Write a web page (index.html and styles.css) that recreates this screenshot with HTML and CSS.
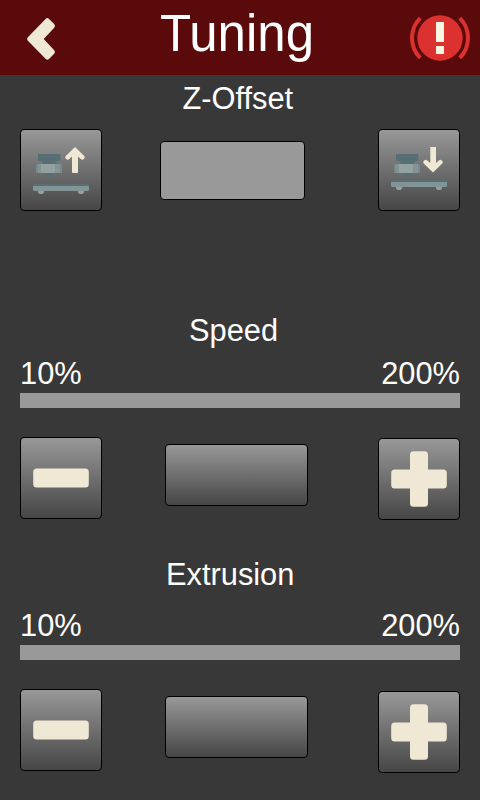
FILE: index.html
```html
<!DOCTYPE html>
<html lang="en">
<head>
<meta charset="utf-8">
<title>Tuning</title>
<link rel="stylesheet" href="styles.css">
</head>
<body>
<header class="bar">
  <svg class="back" width="30" height="44" viewBox="26 17 30 44"><path d="M45.8 18.7Q47.3 17.4 49 18.900L54.2 24Q55.8 26 54.2 27.800L43.7 39L54.2 50.200Q55.8 52 54.2 53.800L49 59.100Q47.3 60.600 45.8 59.100L27.600 40.500Q26.600 39 27.600 37.500Z" fill="#efe8d5"/></svg>
  <h1 class="title">Tuning</h1>
  <svg class="alert" width="62" height="50" viewBox="409 13 62 50"><circle cx="440" cy="38" r="22.700" fill="#dc322f"/><path d="M420.200 18.200A28 28 0 0 0 420.200 57.800M459.800 18.200A28 28 0 0 1 459.800 57.800" fill="none" stroke="#dc322f" stroke-width="4"/><path d="M436 22h8v20h-8zM436 46h8v8h-8z" fill="#fdf6e3"/></svg>
</header>
<main>
  <section class="offset">
    <h2>Z-Offset</h2>
    <div class="controls">
      <button class="btn square" aria-label="Raise"><svg width="80" height="80" viewBox="21 130 80 80"><use href="#nozzle"/><path d="M72 172V156.500L69 159.300Q67.500 160.300 66 158.800Q64.500 157.500 65.500 156.200L75 147L84.500 156.200Q85.500 157.500 84 158.800Q82.500 160.300 81 159.300L78 156.500V172Q78 173 77 173H73Q72 173 72 172Z" fill="#efe8d5"/><use href="#bed"/></svg></button>
      <div class="field"></div>
      <button class="btn square" aria-label="Lower"><svg width="80" height="80" viewBox="21 130 80 80"><use href="#nozzle"/><path d="M72.300 147H78V163L81 160.200Q82.500 159.200 84 160.700Q85.500 162 84.500 163.300L75 172.500L65.500 163.300Q64.500 162 66 160.700Q67.500 159.200 69 160.200L72.300 163Z" fill="#efe8d5"/><use href="#bed" y="-4"/></svg></button>
    </div>
  </section>
  <section class="speed">
    <h2>Speed</h2>
    <div class="range"><span>10%</span><span>200%</span></div>
    <div class="track"></div>
    <div class="controls">
      <button class="btn square" aria-label="Decrease"><svg width="80" height="80"><rect x="12.200" y="30.500" width="55.600" height="19" rx="3.500" fill="#efe8d5"/></svg></button>
      <div class="btn value"></div>
      <button class="btn square plus" aria-label="Increase"><svg width="80" height="80"><path d="M34.500 12.200h11q3.500 0 3.500 3.500V30.500H64.300q3.500 0 3.500 3.500V46q0 3.500-3.500 3.500H49V64.300q0 3.500-3.500 3.500h-11q-3.500 0-3.500-3.500V49.500H15.700q-3.500 0-3.500-3.500V34q0-3.500 3.500-3.500H31V15.700q0-3.500 3.500-3.500z" fill="#efe8d5"/></svg></button>
    </div>
  </section>
  <section class="extrusion">
    <h2>Extrusion</h2>
    <div class="range"><span>10%</span><span>200%</span></div>
    <div class="track"></div>
    <div class="controls">
      <button class="btn square" aria-label="Decrease"><svg width="80" height="80"><rect x="12.200" y="30.500" width="55.600" height="19" rx="3.500" fill="#efe8d5"/></svg></button>
      <div class="btn value"></div>
      <button class="btn square plus" aria-label="Increase"><svg width="80" height="80"><path d="M34.500 12.200h11q3.500 0 3.500 3.500V30.500H64.300q3.500 0 3.500 3.500V46q0 3.500-3.500 3.500H49V64.300q0 3.500-3.500 3.500h-11q-3.500 0-3.500-3.500V49.500H15.700q-3.500 0-3.500-3.500V34q0-3.500 3.500-3.500H31V15.700q0-3.500 3.500-3.500z" fill="#efe8d5"/></svg></button>
    </div>
  </section>
</main>
<svg class="defs" width="0" height="0"><defs>
  <g id="nozzle">
    <path d="M38 154H60.300V160L59.500 161H39L38 160ZM41.500 161H57L55.500 164H43ZM44 173H54L51.500 177H46.500Z" fill="#586e75"/>
    <rect x="36" y="164" width="26" height="9" rx=".5" fill="#78898b"/>
    <rect x="38" y="164" width="22" height="9" fill="#839496"/>
    <rect x="41" y="164" width="14" height="9" fill="#93a1a1"/>
  </g>
  <g id="bed">
    <path d="M33 184H89V190L88 191H34L33 190Z" fill="#839496"/>
    <rect x="33" y="184" width="56" height="2" fill="#586e75"/>
    <path d="M38 191H44V192.500L42.500 194H39.500L38 192.500ZM78 191H84V192.500L82.500 194H79.500L78 192.500Z" fill="#93a1a1"/>
  </g>
</defs></svg>
</body>
</html>
```
FILE: styles.css
```css
* { box-sizing: border-box; }
body {
  margin: 0;
  width: 480px;
  height: 800px;
  overflow: hidden;
  background: #383838;
  color: #fff;
  font-family: "Liberation Sans", Arial, sans-serif;
  font-size: 30.8px;
  line-height: 35px;
}
svg { display: block; }
.defs { position: absolute; }
.bar {
  height: 75px;
  padding: 0 9px 0 26px;
  display: grid;
  grid-template-columns: 30px 1fr 62px;
  background: #5a0a0a;
}
.back { margin-top: 17px; }
.alert { margin-top: 13px; }
.title {
  margin: 4px 0 0 104px;
  font-size: 51px;
  font-weight: 400;
  line-height: 60px;
}
main { padding: 0 20px; }
h2 {
  margin: 0;
  font-size: inherit;
  font-weight: 400;
}
.offset { height: 238px; padding-top: 6px; }
.speed { height: 244px; }
.offset h2 { padding-left: 162.5px; }
.speed h2 { padding-left: 169px; }
.extrusion h2 { padding-left: 146px; }
.controls {
  display: grid;
  grid-template-columns: 145px 143px 82px;
  align-items: start;
}
.controls > :last-child { margin-left: 70px; }
.offset .controls { margin-top: 13px; grid-template-columns: 140px 145px 82px; }
.offset .controls > :last-child { margin-left: 73px; }
.btn {
  margin: 0;
  padding: 0;
  border: 1px solid #000;
  border-radius: 4px;
  background: linear-gradient(#989898, #464646);
}
.square { width: 82px; height: 82px; }
.field {
  height: 59px;
  margin-top: 12px;
  border: 1px solid #000;
  border-radius: 4px;
  background: #999;
}
.value { height: 62px; margin-top: 7px; }
.range {
  display: flex;
  justify-content: space-between;
  margin-top: 8px;
}
.extrusion .range { margin-top: 16px; }
.track { height: 15px; margin-top: 2px; background: #999; }
.speed .controls, .extrusion .controls { margin-top: 29px; }
.speed .plus { margin-top: 1px; }
.extrusion .plus { margin-top: 2px; }
```
